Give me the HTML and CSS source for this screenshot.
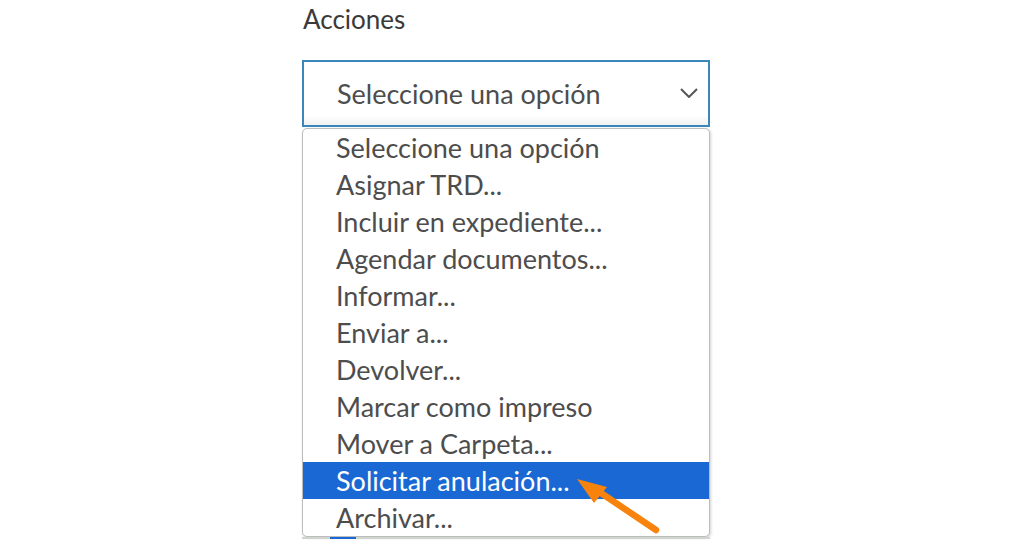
FILE: index.html
```html
<!DOCTYPE html>
<html lang="es">
<head>
<meta charset="utf-8">
<title>Acciones</title>
<link rel="stylesheet" href="styles.css">
</head>
<body>
<div class="field">
  <div class="label">Acciones</div>
  <div class="select">
    <span class="select-text">Seleccione una opción</span>
    <svg class="chevron" width="18" height="10" viewBox="0 0 18 10"><path d="M1 1 L9 9 L17 1" fill="none" stroke="#555" stroke-width="2"/></svg>
  </div>
  <ul class="menu">
    <li class="opt">Seleccione una opción</li>
    <li class="opt">Asignar TRD...</li>
    <li class="opt">Incluir en expediente...</li>
    <li class="opt">Agendar documentos...</li>
    <li class="opt">Informar...</li>
    <li class="opt">Enviar a...</li>
    <li class="opt">Devolver...</li>
    <li class="opt">Marcar como impreso</li>
    <li class="opt">Mover a Carpeta...</li>
    <li class="opt selected">Solicitar anulación...</li>
    <li class="opt">Archivar...</li>
  </ul>
  <div class="under"><span class="under-blue"></span></div>
</div>
<svg class="annot" width="1013" height="544" viewBox="0 0 1013 544">
  <line x1="656" y1="530" x2="598" y2="491" stroke="#f7830d" stroke-width="6.5" stroke-linecap="round"/>
  <polygon points="577,479 607,487 594,503" fill="#f7830d"/>
</svg>
</body>
</html>
```
FILE: styles.css
```css
html, body {
  margin: 0;
  padding: 0;
  background: #ffffff;
}
body {
  font-family: "Lato", "Liberation Sans", sans-serif;
  color: #4d4d4d;
  font-size: 27px;
  position: relative;
  height: 544px;
  overflow: hidden;
}
.field {
  width: 408px;
  margin-left: 302px;
  padding-top: 1px;
}
.label {
  font-size: 26px;
  line-height: 37px;
  height: 37px;
  margin-left: 1px;
  color: #3a3a3a;
}
.select {
  margin-top: 22px;
  height: 63px;
  border: 2px solid #3c87ba;
  display: flex;
  align-items: center;
  justify-content: space-between;
  padding: 0 10px 0 33px;
  background: linear-gradient(#ffffff 85%, #f1f1f1);
}
.select-text {
  line-height: 37px;
}
.chevron {
  display: block;
  margin-top: -2px;
}
.menu {
  list-style: none;
  margin: 1px 0 0 0;
  padding: 0;
  border: 1px solid #bdbdbd;
  border-radius: 5px;
  overflow: hidden;
  background: #fff;
  box-shadow: 1px 1px 3px rgba(0,0,0,0.18);
}
.opt {
  line-height: 37px;
  height: 37px;
  padding-left: 33px;
  white-space: nowrap;
}
.opt.selected {
  background: #1a68d4;
  color: #ffffff;
}
.under {
  height: 2px;
  background: #cfd4cc;
  display: flex;
}
.under-blue {
  width: 26px;
  margin-left: 28px;
  background: #1a68d4;
}
.annot {
  position: absolute;
  left: 0;
  top: 0;
  pointer-events: none;
}
```
